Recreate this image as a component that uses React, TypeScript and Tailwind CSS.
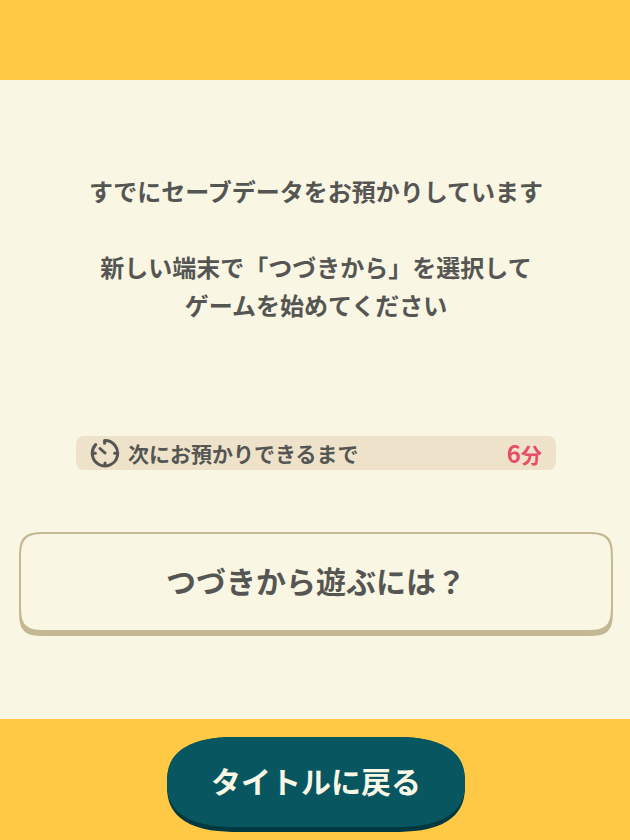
function TimerIcon() {
  return (
    <svg
      viewBox="0 0 30 30"
      className="h-[30px] w-[30px] shrink-0"
      fill="none"
      stroke="currentColor"
      strokeLinecap="round"
      aria-hidden="true"
    >
      <path d="M14.6 5.2V2.6A12.7 12.7 0 1 1 5.7 6.6" strokeWidth="3" strokeLinejoin="round" />
      <path d="M10 10.5l5 4.5" strokeWidth="3" />
      <path d="M3 15.3h2.4M24.6 15.3H27M15 25v2.6" strokeWidth="3" />
    </svg>
  );
}

function Message() {
  return (
    <div className="text-center text-2xl leading-[38px]">
      <p>すでにセーブデータをお預かりしています</p>
      <p className="mt-[38px]">
        新しい端末で「つづきから」を選択して
        <br />
        ゲームを始めてください
      </p>
    </div>
  );
}

function NextSaveTimer() {
  return (
    <div className="mx-auto mt-28 flex h-[34px] w-full max-w-[480px] items-center rounded-lg bg-[#eee3ca] px-3.5 text-[21px] leading-8">
      <TimerIcon />
      <span className="ml-2">次にお預かりできるまで</span>
      <span className="ml-auto text-[#e64d68]">
        <span className="text-2xl leading-8">6</span>分
      </span>
    </div>
  );
}

export default function App() {
  return (
    <div className="flex min-h-screen flex-col bg-[#f9f6e3] font-['Noto_Sans_CJK_JP',sans-serif] font-bold text-[#555653]">
      <header className="h-20 bg-[#ffc945]" />

      <main className="flex-1 pt-[92px] pr-[17px] pb-[82px] pl-[19px]">
        <Message />
        <NextSaveTimer />
        <button
          type="button"
          className="mt-[62px] block h-[104px] w-full rounded-[32px] bg-[#c3b893] px-0.5 pt-0.5 pb-1.5 text-3xl [corner-shape:squircle]"
        >
          <span className="flex h-full items-center justify-center rounded-[30px] bg-[#f9f6e3] pb-1 [corner-shape:squircle]">
            つづきから遊ぶには？
          </span>
        </button>
      </main>

      <footer className="flex h-[121px] justify-center bg-[#ffc945] pt-[18px] pl-0.5">
        <button
          type="button"
          className="h-[95px] w-[298px] rounded-[72px/47px] bg-[#02383f] pb-[5px] text-3xl text-[#f9f8e6] [corner-shape:superellipse(1.35)]"
        >
          <span className="flex h-full items-center justify-center rounded-[72px/45px] bg-[#085660] pb-1 [corner-shape:superellipse(1.35)]">
            タイトルに戻る
          </span>
        </button>
      </footer>
    </div>
  );
}
